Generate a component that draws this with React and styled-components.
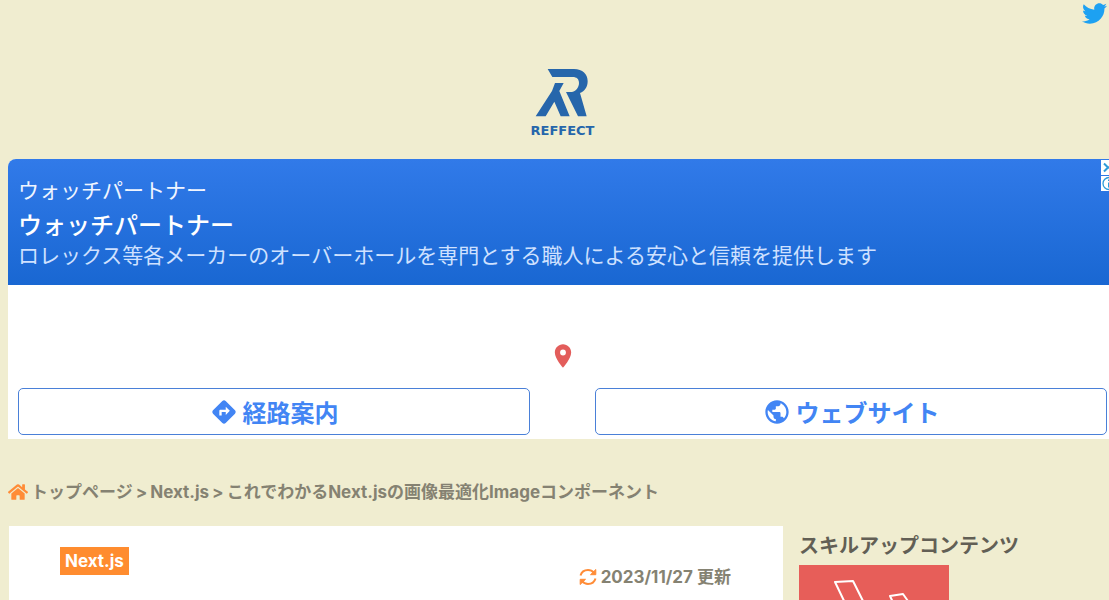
import React from 'react';
import styled, { createGlobalStyle } from 'styled-components';
import { FaTwitter, FaHome } from 'react-icons/fa';
import { MdDirections, MdPublic, MdPlace } from 'react-icons/md';

const GlobalStyle = createGlobalStyle`
  * { box-sizing: border-box; }
  body {
    margin: 0;
    background: #f0edd0;
    color: #858272;
    font-family: Inter, 'Noto Sans CJK JP', sans-serif;
    font-size: 17px;
    font-weight: 700;
  }
  a { color: inherit; text-decoration: none; }
  svg { display: block; flex: none; }
`;

const Viewport = styled.div`
  overflow-x: clip;
`;

const Page = styled.div`
  width: calc(100% + 16px);
  padding: 0 8px;
`;

const SocialBar = styled.nav`
  display: flex;
  justify-content: flex-end;
  height: 68px;
  padding: 1px 10px 0 0;
  color: #1da1f2;
`;

const Header = styled.header`
  display: flex;
  justify-content: center;
  height: 91px;
`;

const Brand = styled.a`
  display: flex;
  flex-direction: column;
  align-items: center;
  color: #2666ab;
`;

const BrandName = styled.span`
  margin-top: 5px;
  font-family: 'DejaVu Sans', sans-serif;
  font-size: 13px;
  line-height: 16px;
`;

const Ad = styled.section`
  background: #fff;
  border-top-left-radius: 8px;
  font-family: 'Noto Sans CJK JP', sans-serif;
`;

const AdBanner = styled.div`
  position: relative;
  height: 126px;
  padding: 13px 10px;
  border-top-left-radius: 8px;
  background: linear-gradient(#317ae9, #1967d2);
  color: #fff;
`;

const AdBrand = styled.p`
  margin: 0;
  font-size: 21px;
  line-height: 34px;
  font-weight: 400;
  color: #f0f5ff;
`;

const AdTitle = styled.h2`
  margin: 0;
  font-size: 24px;
  line-height: 36px;
  font-weight: 500;
`;

const AdText = styled.p`
  margin: 0;
  font-size: 21px;
  line-height: 24px;
  font-weight: 400;
  white-space: nowrap;
  color: #cfe1ff;
`;

const AdControls = styled.div`
  position: absolute;
  top: 1px;
  right: 0;
  display: grid;
  gap: 1px;
`;

const AdControl = styled.button`
  width: 16px;
  height: 15px;
  padding: 0;
  border: 0;
  background: #fff;
  color: #2f9bd8;
`;

const MapArea = styled.div`
  display: flex;
  justify-content: center;
  align-items: flex-end;
  height: 103px;
  padding-bottom: 18px;
  color: #e35d5b;
`;

const AdActions = styled.div`
  display: grid;
  grid-template-columns: 1fr 1fr;
  gap: 65px;
  padding: 0 10px 4px;
`;

const AdAction = styled.a`
  display: flex;
  align-items: center;
  justify-content: center;
  gap: 5px;
  height: 47px;
  border: 1px solid #4a80d8;
  border-radius: 5px;
  color: #4285f4;
  font-size: 24px;
  line-height: 36px;
  font-weight: 700;
`;

const Breadcrumb = styled.nav`
  display: flex;
  align-items: center;
  gap: 3px;
  margin: 41px 0 22px;
  line-height: 24px;
  white-space: nowrap;
`;

const Accent = styled.span`
  color: #ff8c37;
`;

const Columns = styled.div`
  display: grid;
  grid-template-columns: minmax(0, 774fr) minmax(0, 318fr);
  gap: 16px;
  padding-left: 1px;
`;

const Article = styled.main`
  min-height: 160px;
  padding: 21px 52px 24px 51px;
  background: #fff;
`;

const Tag = styled.a`
  display: block;
  width: fit-content;
  padding: 0 5px;
  background: #ff8c2f;
  color: #fff;
  line-height: 28px;
`;

const Updated = styled.p`
  display: flex;
  align-items: center;
  justify-content: flex-end;
  gap: 4px;
  margin: -10px 0 0;
  line-height: 24px;
`;

const Sidebar = styled.aside`
  padding-top: 5px;
`;

const SidebarTitle = styled.h2`
  margin: 0 0 4px;
  color: #625f55;
  font-size: 20px;
  line-height: 30px;
  white-space: nowrap;
`;

const Thumbnail = styled.a`
  display: block;
  width: 150px;
  background: #e75e59;
`;

function LogoMark() {
  return (
    <svg width="54" height="50" viewBox="108 56 162 150" fill="currentColor" aria-hidden="true">
      <path d="M146 59H225C251 59 266 74 266 95C266 113 257 125 243 131L263 201H237L201 128H219C233 126 240 112 240 101C240 89 233 83 221 83H160Z" />
      <path d="M168 101H194L181 125L212 201H185L166 157L140 201L110 201L159 125Z" />
    </svg>
  );
}

function SyncIcon() {
  return (
    <svg width="18" height="18" viewBox="0 0 18 18" fill="none" stroke="currentColor" strokeWidth="2" strokeLinejoin="round" aria-hidden="true">
      <path d="M1.500 7.500C2.500 4 5.500 2 9 2C11.500 2 13.500 3 15 4.800" />
      <path d="M16.800 1.500V6.700H11.500Z" fill="currentColor" strokeWidth="1" />
      <path d="M16.500 10.500C15.500 14 12.500 16 9 16C6.500 16 4.500 15 3 13.200" />
      <path d="M1.200 16.500V11.300H6.500Z" fill="currentColor" strokeWidth="1" />
    </svg>
  );
}

export default function App() {
  return (
    <Viewport>
      <GlobalStyle />
      <Page>
        <SocialBar>
          <a href="#twitter" aria-label="Twitter"><FaTwitter size={25} /></a>
        </SocialBar>
        <Header>
          <Brand href="#home">
            <LogoMark />
            <BrandName>REFFECT</BrandName>
          </Brand>
        </Header>

        <Ad>
          <AdBanner>
            <AdBrand>ウォッチパートナー</AdBrand>
            <AdTitle>ウォッチパートナー</AdTitle>
            <AdText>ロレックス等各メーカーのオーバーホールを専門とする職人による安心と信頼を提供します</AdText>
            <AdControls>
              <AdControl aria-label="閉じる">
                <svg width="16" height="15" fill="none" stroke="currentColor" strokeWidth="2">
                  <path d="M3 3.500L7 7.500L3 11.500M12 3.500L8 7.500L12 11.500" />
                </svg>
              </AdControl>
              <AdControl aria-label="広告について">
                <svg width="16" height="15" fill="none" stroke="currentColor" strokeWidth="1.300">
                  <circle cx="8" cy="7.500" r="6" />
                  <path d="M8 3.500V5M8 6.500V11.500" strokeWidth="2" />
                </svg>
              </AdControl>
            </AdControls>
          </AdBanner>
          <MapArea><MdPlace size={28} /></MapArea>
          <AdActions>
            <AdAction href="#route"><MdDirections size={28} />経路案内</AdAction>
            <AdAction href="#website"><MdPublic size={28} />ウェブサイト</AdAction>
          </AdActions>
        </Ad>

        <Breadcrumb>
          <Accent><FaHome size={20} /></Accent>
          <a href="#top">トップページ</a>
          <span>&gt;</span>
          <a href="#nextjs">Next.js</a>
          <span>&gt;</span>
          <span>これでわかるNext.jsの画像最適化Imageコンポーネント</span>
        </Breadcrumb>

        <Columns>
          <Article>
            <Tag href="#nextjs">Next.js</Tag>
            <Updated>
              <Accent><SyncIcon /></Accent>
              2023/11/27 更新
            </Updated>
          </Article>
          <Sidebar>
            <SidebarTitle>スキルアップコンテンツ</SidebarTitle>
            <Thumbnail href="#laravel" aria-label="スキルアップコンテンツ">
              <svg width="150" height="100" fill="none" stroke="#fff" strokeWidth="2" strokeLinejoin="round">
                <path d="M36 17L54 16L88 84L70 88Z" />
                <path d="M91 31L104 29L116 46L100 50Z" />
              </svg>
            </Thumbnail>
          </Sidebar>
        </Columns>
      </Page>
    </Viewport>
  );
}
